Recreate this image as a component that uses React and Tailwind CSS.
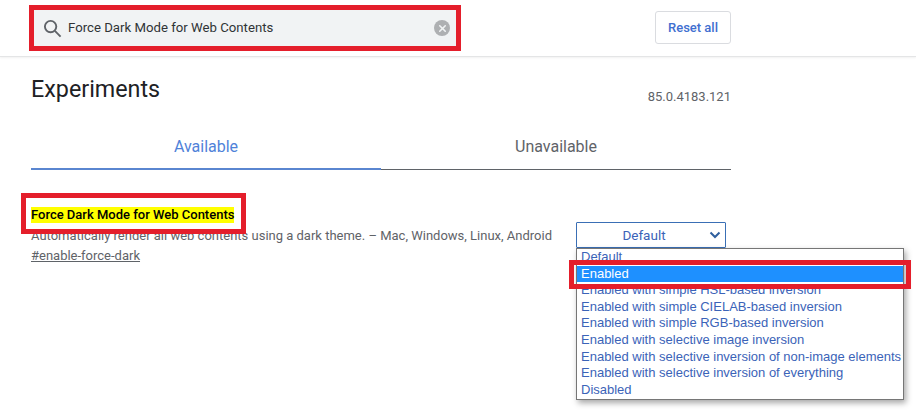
import React from 'react';
import { X } from 'lucide-react';

const options = [
  'Default',
  'Enabled',
  'Enabled with simple HSL-based inversion',
  'Enabled with simple CIELAB-based inversion',
  'Enabled with simple RGB-based inversion',
  'Enabled with selective image inversion',
  'Enabled with selective inversion of non-image elements',
  'Enabled with selective inversion of everything',
  'Disabled',
];

const App = () => {
  return (
    <div className="h-[414px] w-[916px] overflow-hidden bg-white font-['Roboto',sans-serif]">
      {/* Header */}
      <header className="flex h-[57px] items-start border-b border-[#e4e5e6] shadow-[0_1px_2px_rgba(0,0,0,0.06)]">
        <div className="ml-[29px] mt-[5px] flex h-[46px] w-[432px] items-center border-[5px] border-[#e41e2b] bg-[#f1f3f4] pl-[9px] pr-[6px]">
          <svg width="19" height="19" viewBox="0 0 20 20" fill="none" stroke="#5f6368" strokeWidth="2" className="shrink-0">
            <circle cx="8" cy="8" r="6" />
            <path d="M12.5 12.5 L18.5 18.5" />
          </svg>
          <span className="ml-[6px] flex-1 text-[13.2px] text-[#303336]">Force Dark Mode for Web Contents</span>
          <span className="flex h-4 w-4 items-center justify-center rounded-full bg-[#aeb0b2]">
            <X size={11} strokeWidth={3.5} color="#f1f3f4" />
          </span>
        </div>
        <button className="ml-[194px] mt-[11px] h-[33px] w-[76px] rounded-[3px] border border-[#dadce0] text-[13px] font-medium text-[#3f6fd0]">
          Reset all
        </button>
      </header>

      <main className="ml-[31px] w-[700px]">
        <div className="flex items-start justify-between pt-[16px]">
          <h1 className="text-[23.3px] leading-[32px] text-[#202124]">Experiments</h1>
          <span className="mt-[16px] text-[13px] leading-[16px] text-[#5f6368]">85.0.4183.121</span>
        </div>

        {/* Tabs */}
        <div className="mt-[31px] flex text-[16px]">
          <div className="h-[34px] w-[350px] border-b-2 border-[#5a86d0] text-center leading-[22px] text-[#4f82d9]">Available</div>
          <div className="flex h-[34px] w-[350px] items-start justify-center border-b border-[#5f6368] leading-[22px] text-[#5f6368]">Unavailable</div>
        </div>

        {/* Experiment row */}
        <div className="mt-[37px] flex w-[695px] items-start justify-between">
          <div>
            <div className="relative w-fit">
              <h2 className="bg-[#ffff00] text-[13px] font-medium leading-[16px] text-black">Force Dark Mode for Web Contents</h2>
              <span className="absolute left-[-10px] top-[-14px] h-[41px] w-[225px] border-[5px] border-[#e41e2b]" />
            </div>
            <p className="mt-[3px] text-[13px] leading-[20px] text-[#5f6368]">
              Automatically render all web contents using a dark theme. – Mac, Windows, Linux, Android
            </p>
            <a className="block text-[13px] leading-[20px] text-[#5f6368] underline">#enable-force-dark</a>
          </div>

          <div className="relative mt-[15px] w-[150px]">
            <div className="relative flex h-[26px] items-center justify-center rounded-[1px] border border-[#3a6fb5] pr-[14px] text-[13.5px] text-[#3b63b8]">
              Default
              <svg width="12" height="8" viewBox="0 0 12 8" fill="none" stroke="#2f5f9e" strokeWidth="2" className="absolute right-[4px] top-[8px]">
                <path d="M1.5 1.5 L6 6 L10.5 1.5" />
              </svg>
            </div>
            <ul className="absolute left-0 top-[26px] z-10 h-[152px] w-[328px] border border-[#767676] bg-white font-['Liberation_Sans',sans-serif] text-[13px] leading-[16.6px] text-[#3b63b8] shadow-[2px_3px_6px_rgba(0,0,0,0.35)]">
              {options.map((opt) => (
                <li key={opt} className={opt === 'Enabled' ? 'bg-[#1e90ff] pl-[4px] text-white' : 'whitespace-nowrap pl-[4px]'}>
                  {opt}
                </li>
              ))}
              <span className="absolute left-[-8px] top-[11px] h-[29px] w-[342px] border-[5px] border-[#e41e2b]" />
            </ul>
          </div>
        </div>
      </main>
    </div>
  );
};

export default App;
